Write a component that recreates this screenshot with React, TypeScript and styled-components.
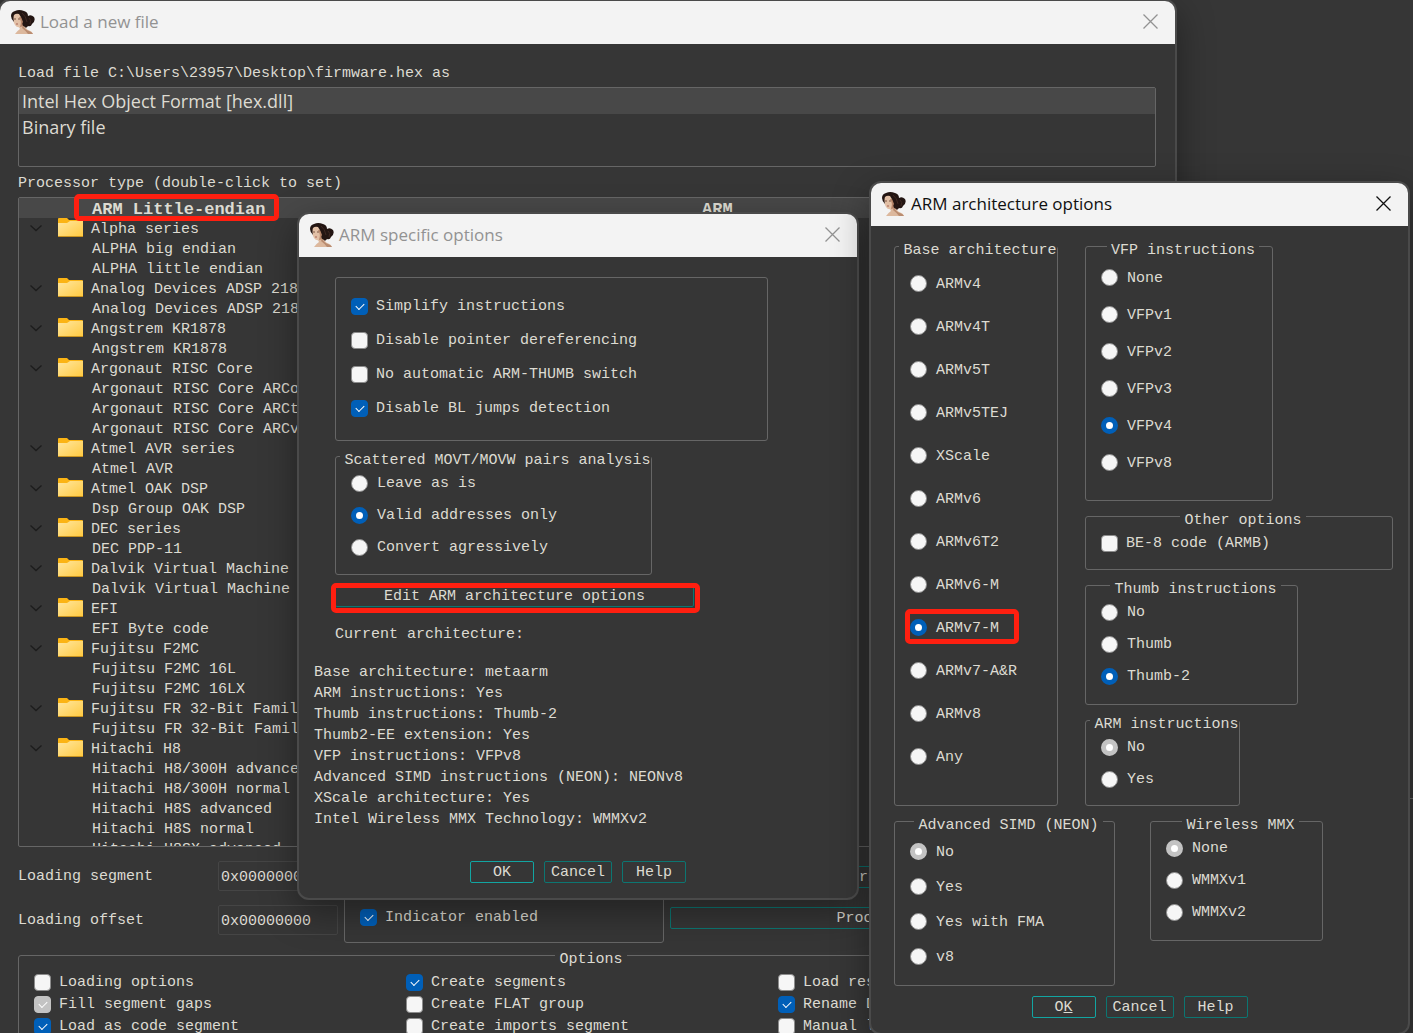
import React from "react";
import styled, { createGlobalStyle, css } from "styled-components";

const color = {
  surface: "#363636",
  row: "#484848",
  edge: "#4a4a4a",
  line: "#666666",
  field: "#454545",
  text: "#dddbd2",
  title: "#f3f3f3",
  muted: "#929292",
  teal: "#0c7672",
  tealBright: "#12a5a2",
  blue: "#005fb8",
  red: "#ff1f10",
};

const mono = '"Liberation Mono", "Courier New", monospace';
const sans = '"Open Sans", "Noto Sans", sans-serif';

const GlobalStyle = createGlobalStyle`
  *, *::after { box-sizing: border-box; }
  body { margin: 0; background: ${color.surface}; overflow: hidden; }
`;

const Desktop = styled.main`
  position: relative;
  height: 100vh;
  overflow: hidden;
  padding-top: 798px;
  background: ${color.surface};
  color: ${color.text};
  font: 15px/20px ${mono};
`;

const DesktopRule = styled.div`
  height: 1px;
  background: ${color.line};
`;

/* ---------- windows ---------- */

const Frame = styled.section<{ $x: number; $y: number; $width: number }>`
  position: absolute;
  left: ${(p) => p.$x}px;
  top: ${(p) => p.$y}px;
  width: ${(p) => p.$width}px;
  border: 2px solid ${color.edge};
  border-radius: 12px;
  background: ${color.surface};
  box-shadow: 0 12px 36px rgba(0, 0, 0, 0.38);
`;

const TitleBar = styled.header<{ $active?: boolean }>`
  display: flex;
  align-items: center;
  gap: 5px;
  height: 43px;
  padding: 0 17px 2px 11px;
  border-radius: 10px 10px 0 0;
  background: ${color.title};
  color: ${(p) => (p.$active ? "#101010" : color.muted)};
`;

const Title = styled.h1`
  flex: 1;
  margin: 0;
  font: 400 17px/24px ${sans};
`;

const CloseButton = styled.button`
  display: flex;
  padding: 0;
  border: 0;
  background: none;
  color: inherit;
`;

const Portrait = () => (
  <svg width="24" height="24" viewBox="0 0 24 24" aria-hidden="true">
    <path d="M7 15 L9 19 Q6 21 4 24 H22 Q21 21 17 20 Q14 18 14 14 Z" fill="#dcb89d" />
    <path d="M12 15 Q14 20 18 21 Q21 22 22 24 H17 Q15 21 11 18 Z" fill="#b98c70" />
    <path d="M2 6 Q2 12 4 15 Q6 18 9 17 L13 12 L12 3 L5 2 Z" fill="#e2c0a6" />
    <path d="M8 7 Q11 11 9 17 L13 16 L14 7 Z" fill="#b58468" />
    <path
      d="M0 6 Q0 2 4 1 Q8 -1 13 1 Q17 2 17 6 Q20 4 23 7 Q25 11 21 14 Q20 17 17 16 Q15 19 14 17 Q10 15 12 12 Q11 8 8 4 Q5 3 3 5 Q2 8 3 12 Q0 9 0 6 Z"
      fill="#231512"
    />
    <path d="M11 3 Q15 6 16 12 M18 8 Q21 10 19 14" stroke="#3f2822" fill="none" />
    <path d="M3 9 H5 M7 9 H9" stroke="#7a5543" />
    <path d="M5 14 H7" stroke="#a86456" />
  </svg>
);

const CloseGlyph = () => (
  <svg width="15" height="15" viewBox="0 0 15 15" aria-hidden="true">
    <path d="M0.5 0.5 L14.5 14.5 M14.5 0.5 L0.5 14.5" stroke="currentColor" strokeWidth="1.3" />
  </svg>
);

type WindowProps = {
  title: string;
  x: number;
  y: number;
  width: number;
  active?: boolean;
  children: React.ReactNode;
};

const Window = ({ title, x, y, width, active, children }: WindowProps) => (
  <Frame $x={x} $y={y} $width={width} aria-label={title}>
    <TitleBar $active={active}>
      <Portrait />
      <Title>{title}</Title>
      <CloseButton type="button" aria-label="Close">
        <CloseGlyph />
      </CloseButton>
    </TitleBar>
    {children}
  </Frame>
);

/* ---------- controls ---------- */

const marker = css`
  position: absolute;
  border: 5px solid ${color.red};
  border-radius: 5px;
  pointer-events: none;
`;

const Button = styled.button<{ $primary?: boolean; $width?: number }>`
  position: relative;
  width: ${(p) => (p.$width ? `${p.$width}px` : "auto")};
  height: 22px;
  padding: 2px 0 0;
  border: 1px solid ${(p) => (p.$primary ? color.tealBright : color.teal)};
  border-radius: 2px;
  background: transparent;
  color: inherit;
  font: inherit;
  line-height: 18px;
`;

const MarkedButton = styled(Button)`
  &::after {
    content: "";
    ${marker}
    inset: -3px -7px -7px -5px;
  }
`;

const ButtonBar = styled.footer`
  display: flex;
  justify-content: center;
  gap: 10px;
`;

const DialogButtons = () => (
  <>
    <Button type="button" $width={68}>
      Cancel
    </Button>
    <Button type="button" $width={64}>
      Help
    </Button>
  </>
);

const Choice = styled.label<{ $height: number; $gap: number; $marked?: boolean }>`
  position: relative;
  display: flex;
  align-items: center;
  gap: ${(p) => p.$gap}px;
  height: ${(p) => p.$height}px;
  white-space: nowrap;
  ${(p) =>
    p.$marked &&
    css`
      &::after {
        content: "";
        ${marker}
        inset: 3px auto 5px -5px;
        width: 114px;
      }
    `}
`;

const Text = styled.span`
  padding-top: 2px;
`;

const Box = styled.input`
  appearance: none;
  position: relative;
  flex: none;
  width: 17px;
  height: 17px;
  margin: 0;
  border: 1px solid #8c8c8c;
  background: #f6f6f6;

  &[type="checkbox"] {
    border-radius: 4px;
  }
  &[type="checkbox"]:checked {
    border-color: ${color.blue};
    background: ${color.blue};
  }
  &[type="checkbox"]:checked:disabled {
    border-color: #c3c3c3;
    background: #c3c3c3;
  }
  &[type="checkbox"]:checked::after {
    content: "";
    position: absolute;
    left: 4px;
    top: 4px;
    width: 8px;
    height: 5px;
    border: solid #ffffff;
    border-width: 0 0 1px 1px;
    transform: rotate(-45deg);
  }
  &[type="radio"] {
    border-radius: 50%;
  }
  &[type="radio"]:checked {
    border: 5px solid ${color.blue};
    background: #ffffff;
  }
  &[type="radio"]:checked:disabled {
    border-color: #c3c3c3;
  }
`;

type CheckProps = { label: string; on?: boolean; disabled?: boolean; height?: number };

const Check = ({ label, on, disabled, height = 32 }: CheckProps) => (
  <Choice $height={height} $gap={8}>
    <Box type="checkbox" defaultChecked={on} disabled={disabled} />
    <Text>{label}</Text>
  </Choice>
);

type RadiosProps = {
  name: string;
  options: string[];
  value: string;
  disabled?: boolean;
  height?: number;
  marked?: string;
};

const Radios = ({ name, options, value, disabled, height = 32, marked }: RadiosProps) => (
  <>
    {options.map((option) => (
      <Choice key={option} $height={height} $gap={9} $marked={option === marked}>
        <Box
          type="radio"
          name={name}
          defaultChecked={option === value}
          disabled={disabled && option === value}
        />
        <Text>{option}</Text>
      </Choice>
    ))}
  </>
);

const GroupBox = styled.fieldset<{ $width?: number; $snug?: boolean }>`
  width: ${(p) => (p.$width ? `${p.$width}px` : "auto")};
  min-width: 0;
  margin: 0;
  padding: 0 0 0 ${(p) => (p.$snug ? 4 : 8)}px;
  border: 1px solid ${color.line};
  border-radius: 3px;
`;

const Legend = styled.legend<{ $snug?: boolean }>`
  margin: 0 auto;
  padding: ${(p) => (p.$snug ? "10px 0 0 4px" : "10px 4px 0")};
  line-height: 12px;
  white-space: nowrap;
`;

const GroupBody = styled.div<{ $top: number; $bottom: number; $snug?: boolean }>`
  padding: ${(p) => p.$top}px 0 ${(p) => p.$bottom}px ${(p) => (p.$snug ? 11 : 7)}px;
`;

type GroupProps = {
  legend?: string;
  width?: number;
  snug?: boolean;
  top?: number;
  bottom: number;
  children: React.ReactNode;
};

const Group = ({ legend, width, snug, top = 0, bottom, children }: GroupProps) => (
  <GroupBox $width={width} $snug={snug}>
    {legend && <Legend $snug={snug}>{legend}</Legend>}
    <GroupBody $top={top} $bottom={bottom} $snug={snug}>
      {children}
    </GroupBody>
  </GroupBox>
);

/* ---------- "Load a new file" ---------- */

const LoaderBody = styled.div`
  padding: 18px 19px 24px 18px;
`;

const Caption = styled.div`
  padding-top: 2px;
  line-height: 20px;
`;

const FormatList = styled.ul`
  height: 80px;
  margin: 3px 0 5px;
  padding: 0;
  border: 1px solid ${color.line};
  border-radius: 2px;
  list-style: none;
  font: 18px/26px ${sans};
`;

const FormatItem = styled.li<{ $selected?: boolean }>`
  padding-left: 3px;
  background: ${(p) => (p.$selected ? color.row : "transparent")};
`;

const TreeHolder = styled.div`
  position: relative;
  margin-top: 3px;
`;

const TreeMarker = styled.div`
  ${marker}
  left: 56px;
  top: -3px;
  width: 205px;
  height: 27px;
`;

const Tree = styled.ul`
  height: 650px;
  margin: 0;
  padding: 0;
  overflow: hidden;
  border: 1px solid ${color.line};
  border-radius: 2px;
  list-style: none;
`;

const TreeRow = styled.li<{ $leaf?: boolean; $selected?: boolean }>`
  display: flex;
  align-items: center;
  height: 20px;
  padding-left: ${(p) => (p.$leaf ? 73 : 11)}px;
  white-space: nowrap;
  ${(p) =>
    p.$selected &&
    css`
      background: ${color.row};
      font-size: 17px;
      font-weight: 700;
    `}
`;

const TreeText = styled.span`
  padding-top: 3px;
`;

const TreeName = styled(TreeText)`
  width: 610px;
`;

const ChevronIcon = styled.svg`
  margin-right: 16px;
`;

const FolderIcon = styled.svg`
  margin-right: 8px;
`;

const Chevron = () => (
  <ChevronIcon width="12" height="8" viewBox="0 0 12 8" aria-hidden="true">
    <path d="M0.5 1.5 L6 6.5 L11.5 1.5" fill="none" stroke="#1c1c1c" strokeWidth="1.3" />
  </ChevronIcon>
);

const Folder = () => (
  <FolderIcon width="25" height="20" viewBox="0 0 25 20" aria-hidden="true">
    <defs>
      <linearGradient id="folderFace" x1="0" y1="0" x2="1" y2="1">
        <stop offset="0" stopColor="#ffe7a0" />
        <stop offset="1" stopColor="#ffc93f" />
      </linearGradient>
    </defs>
    <path d="M0 1 Q0 0 1 0 H9 L11 2 H24 Q25 2 25 3 V10 H0 Z" fill="#fbb414" />
    <path d="M0 5 H9 L12 3 H25 V18 Q25 19 24 19 H1 Q0 19 0 18 Z" fill="url(#folderFace)" />
    <path d="M0 18.5 H25" stroke="#c9931f" />
  </FolderIcon>
);

const processors: Array<[string, string[]]> = [
  ["Alpha series", ["ALPHA big endian", "ALPHA little endian"]],
  ["Analog Devices ADSP 218x", ["Analog Devices ADSP 218x"]],
  ["Angstrem KR1878", ["Angstrem KR1878"]],
  [
    "Argonaut RISC Core",
    ["Argonaut RISC Core ARCompact", "Argonaut RISC Core ARCtangent", "Argonaut RISC Core ARCv2"],
  ],
  ["Atmel AVR series", ["Atmel AVR"]],
  ["Atmel OAK DSP", ["Dsp Group OAK DSP"]],
  ["DEC series", ["DEC PDP-11"]],
  ["Dalvik Virtual Machine", ["Dalvik Virtual Machine"]],
  ["EFI", ["EFI Byte code"]],
  ["Fujitsu F2MC", ["Fujitsu F2MC 16L", "Fujitsu F2MC 16LX"]],
  ["Fujitsu FR 32-Bit Family", ["Fujitsu FR 32-Bit Family"]],
  [
    "Hitachi H8",
    [
      "Hitachi H8/300H advanced",
      "Hitachi H8/300H normal",
      "Hitachi H8S advanced",
      "Hitachi H8S normal",
      "Hitachi H8SX advanced",
    ],
  ],
];

const Settings = styled.div`
  display: grid;
  grid-template-columns: 320px 320px 1fr;
  column-gap: 6px;
`;

const Fields = styled.div`
  display: grid;
  align-content: start;
  gap: 14px;
  padding-top: 14px;
`;

const Field = styled.label`
  display: grid;
  grid-template-columns: 200px 1fr;
  align-items: center;
`;

const TextInput = styled.input`
  width: 100%;
  height: 30px;
  padding: 2px 2px 0;
  border: 1px solid ${color.field};
  border-radius: 2px;
  background: transparent;
  color: inherit;
  font: inherit;
`;

const SideButtons = styled.div`
  display: grid;
  align-content: start;
  gap: 19px;
  padding-top: 19px;
`;

const OptionGrid = styled.div`
  display: grid;
  grid-template-columns: repeat(3, 372px);
`;

const LoadOptions = styled.div`
  margin-top: 1px;
`;

const LoaderWindow = () => (
  <Window title="Load a new file" x={-2} y={-1} width={1179}>
    <LoaderBody>
      <Caption>{"Load file C:\\Users\\23957\\Desktop\\firmware.hex as"}</Caption>
      <FormatList>
        <FormatItem $selected>Intel Hex Object Format [hex.dll]</FormatItem>
        <FormatItem>Binary file</FormatItem>
      </FormatList>
      <Caption>Processor type (double-click to set)</Caption>
      <TreeHolder>
        <Tree>
          <TreeRow $leaf $selected>
            <TreeName>ARM Little-endian</TreeName>
            <TreeText>ARM</TreeText>
          </TreeRow>
          {processors.map(([family, models]) => (
            <React.Fragment key={family}>
              <TreeRow>
                <Chevron />
                <Folder />
                <TreeText>{family}</TreeText>
              </TreeRow>
              {models.map((model) => (
                <TreeRow key={model} $leaf>
                  <TreeText>{model}</TreeText>
                </TreeRow>
              ))}
            </React.Fragment>
          ))}
        </Tree>
        <TreeMarker />
      </TreeHolder>
      <Settings>
        <Fields>
          <Field>
            <Text>Loading segment</Text>
            <TextInput type="text" defaultValue="0x00000000" />
          </Field>
          <Field>
            <Text>Loading offset</Text>
            <TextInput type="text" defaultValue="0x00000000" />
          </Field>
        </Fields>
        <Group top={53} bottom={9}>
          <Check label="Indicator enabled" on />
        </Group>
        <SideButtons>
          <Button type="button">Kernel options 1</Button>
          <Button type="button">Processor options</Button>
        </SideButtons>
      </Settings>
      <LoadOptions>
        <Group legend="Options" top={5} bottom={12}>
          <OptionGrid>
            <Check height={22} label="Loading options" />
            <Check height={22} label="Create segments" on />
            <Check height={22} label="Load resources" />
            <Check height={22} label="Fill segment gaps" on disabled />
            <Check height={22} label="Create FLAT group" />
            <Check height={22} label="Rename DLL entries" on />
            <Check height={22} label="Load as code segment" on />
            <Check height={22} label="Create imports segment" />
            <Check height={22} label="Manual load" />
          </OptionGrid>
        </Group>
      </LoadOptions>
    </LoaderBody>
  </Window>
);

/* ---------- "ARM specific options" ---------- */

const SpecificBody = styled.div`
  padding: 20px 15px 15px;
`;

const Indented = styled.div`
  display: flex;
  flex-direction: column;
  align-items: flex-start;
  padding-left: 21px;
`;

const Stack = styled.div`
  display: grid;
  gap: 4px;
  margin-bottom: 10px;
`;

const Current = styled.p`
  margin: 17px 0 16px;
  line-height: 22px;
`;

const Summary = styled.ul`
  margin: 0 0 31px;
  padding: 0;
  list-style: none;
  line-height: 21px;
`;

const summary = [
  "Base architecture: metaarm",
  "ARM instructions: Yes",
  "Thumb instructions: Thumb-2",
  "Thumb2-EE extension: Yes",
  "VFP instructions: VFPv8",
  "Advanced SIMD instructions (NEON): NEONv8",
  "XScale architecture: Yes",
  "Intel Wireless MMX Technology: WMMXv2",
];

const SpecificWindow = () => (
  <Window title="ARM specific options" x={297} y={212} width={562}>
    <SpecificBody>
      <Indented>
        <Stack>
          <Group width={433} top={11} bottom={15}>
            <Check height={34} label="Simplify instructions" on />
            <Check height={34} label="Disable pointer dereferencing" />
            <Check height={34} label="No automatic ARM-THUMB switch" />
            <Check height={34} label="Disable BL jumps detection" on />
          </Group>
          <Group legend="Scattered MOVT/MOVW pairs analysis" width={317} snug bottom={11}>
            <Radios
              name="scattered"
              options={["Leave as is", "Valid addresses only", "Convert agressively"]}
              value="Valid addresses only"
            />
          </Group>
        </Stack>
        <MarkedButton type="button" $width={359}>
          Edit ARM architecture options
        </MarkedButton>
        <Current>Current architecture:</Current>
      </Indented>
      <Summary>
        {summary.map((line) => (
          <li key={line}>{line}</li>
        ))}
      </Summary>
      <ButtonBar>
        <Button type="button" $primary $width={64}>
          OK
        </Button>
        <DialogButtons />
      </ButtonBar>
    </SpecificBody>
  </Window>
);

/* ---------- "ARM architecture options" ---------- */

const ArchitectureBody = styled.div`
  padding: 9px 15px 15px 23px;
`;

const Columns = styled.div`
  display: grid;
  grid-template-columns: 164px 1fr;
  column-gap: 27px;
`;

const Column = styled.div`
  display: flex;
  flex-direction: column;
  gap: 4px;
`;

const LowerRow = styled.div`
  display: flex;
  align-items: flex-start;
  gap: 35px;
  margin: 4px 0 10px;
`;

const ArchitectureButtons = styled(ButtonBar)`
  padding-right: 8px;
`;

const ArchitectureWindow = () => (
  <Window title="ARM architecture options" x={869} y={181} width={541} active>
    <ArchitectureBody>
      <Columns>
        <Group legend="Base architecture" snug top={5} bottom={27}>
          <Radios
            name="base"
            height={43}
            options={[
              "ARMv4",
              "ARMv4T",
              "ARMv5T",
              "ARMv5TEJ",
              "XScale",
              "ARMv6",
              "ARMv6T2",
              "ARMv6-M",
              "ARMv7-M",
              "ARMv7-A&R",
              "ARMv8",
              "Any",
            ]}
            value="ARMv7-M"
            marked="ARMv7-M"
          />
        </Group>
        <Column>
          <Group legend="VFP instructions" width={188} top={2} bottom={19}>
            <Radios
              name="vfp"
              height={37}
              options={["None", "VFPv1", "VFPv2", "VFPv3", "VFPv4", "VFPv8"]}
              value="VFPv4"
            />
          </Group>
          <Group legend="Other options" bottom={10}>
            <Check label="BE-8 code (ARMB)" />
          </Group>
          <Group legend="Thumb instructions" width={213} bottom={12}>
            <Radios name="thumb" options={["No", "Thumb", "Thumb-2"]} value="Thumb-2" />
          </Group>
          <Group legend="ARM instructions" width={155} snug bottom={10}>
            <Radios name="arm" options={["No", "Yes"]} value="No" disabled />
          </Group>
        </Column>
      </Columns>
      <LowerRow>
        <Group legend="Advanced SIMD (NEON)" width={221} top={2} bottom={11}>
          <Radios
            name="neon"
            height={35}
            options={["No", "Yes", "Yes with FMA", "v8"]}
            value="No"
            disabled
          />
        </Group>
        <Group legend="Wireless MMX" width={173} bottom={12}>
          <Radios name="wmmx" options={["None", "WMMXv1", "WMMXv2"]} value="None" disabled />
        </Group>
      </LowerRow>
      <ArchitectureButtons>
        <Button type="button" $primary $width={64}>
          O<u>K</u>
        </Button>
        <DialogButtons />
      </ArchitectureButtons>
    </ArchitectureBody>
  </Window>
);

export default function App() {
  return (
    <Desktop>
      <GlobalStyle />
      <DesktopRule />
      <LoaderWindow />
      <SpecificWindow />
      <ArchitectureWindow />
    </Desktop>
  );
}
